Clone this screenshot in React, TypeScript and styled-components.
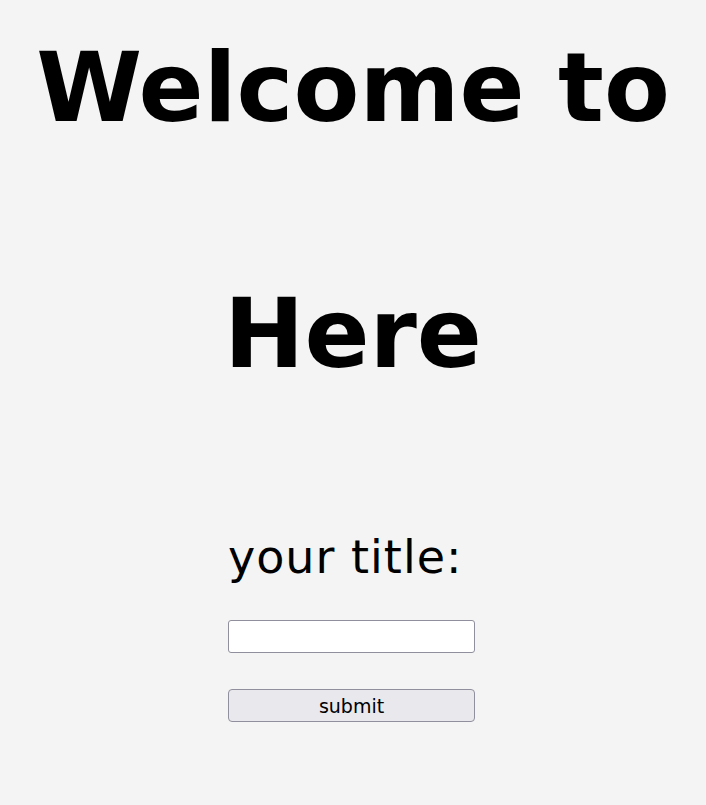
import React from "react";
import styled, { createGlobalStyle } from "styled-components";

const Global = createGlobalStyle`
  html, body { margin: 0; padding: 0; background: #f4f4f4; }
  body { font-family: "DejaVu Sans", Verdana, sans-serif; color: #000; }
`;

const Page = styled.main`
  display: flex;
  flex-direction: column;
  align-items: center;
  padding-top: 32px;
`;

const Heading = styled.h1`
  margin: 0;
  display: flex;
  flex-direction: column;
  align-items: center;
  gap: 134px;
  font-size: 96px;
  font-weight: bold;
  line-height: normal;
`;

const HeadingLine = styled.span`
  display: block;
  white-space: nowrap;
`;

const Form = styled.form`
  display: flex;
  flex-direction: column;
  width: 247px;
  margin-top: 140px;
  margin-right: 3px;
`;

const Label = styled.label`
  font-size: 46px;
  letter-spacing: 1px;
  line-height: normal;
  white-space: nowrap;
`;

const Input = styled.input`
  box-sizing: border-box;
  height: 33px;
  width: 100%;
  margin-top: 36px;
  border: 1px solid #8f8f9d;
  border-radius: 3px;
  background: #fff;
`;

const Button = styled.button`
  box-sizing: border-box;
  height: 33px;
  width: 100%;
  margin-top: 36px;
  border: 1px solid #8f8f9d;
  border-radius: 4px;
  background: #e9e9ed;
  font-family: "DejaVu Sans", Verdana, sans-serif;
  font-size: 19px;
  color: #000;
  padding: 0;
`;

export default function App() {
  return (
    <>
      <Global />
      <Page>
        <Heading>
          <HeadingLine>Welcome to</HeadingLine>
          <HeadingLine>Here</HeadingLine>
        </Heading>
        <Form onSubmit={(e) => e.preventDefault()}>
          <Label htmlFor="title">your title:</Label>
          <Input id="title" type="text" />
          <Button type="submit">submit</Button>
        </Form>
      </Page>
    </>
  );
}
